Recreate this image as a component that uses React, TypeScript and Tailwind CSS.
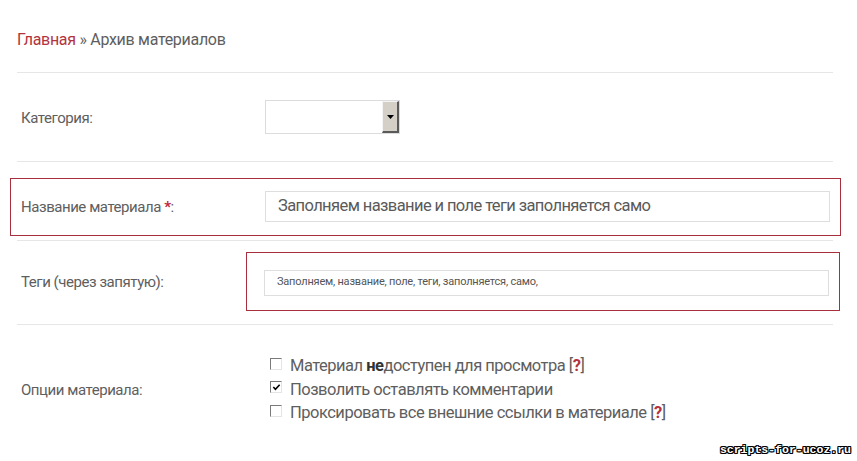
import React from "react";

function Checkbox({ checked }: { checked?: boolean }) {
  return (
    <span className="relative inline-block w-[12px] h-[12px] ml-[5px] mr-[8px] bg-white border-t border-l border-t-[#7a7a7a] border-l-[#7a7a7a] border-b border-r border-b-[#e4e4e4] border-r-[#e4e4e4] shrink-0 -translate-y-[2px]">
      {checked && (
        <svg viewBox="0 0 10 10" className="absolute left-[1px] top-[1px] w-[9px] h-[9px]">
          <path d="M1.5 4.5 L3.8 7 L8.5 2" fill="none" stroke="#000" strokeWidth="1.8" />
        </svg>
      )}
    </span>
  );
}

export default function App() {
  const font = { fontFamily: "Roboto, 'Noto Sans', sans-serif" };
  return (
    <div className="relative w-[857px] h-[461px] bg-white overflow-hidden" style={font}>
      <div className="ml-[17px] w-[816px] text-[#5e5e5e]">
        <div className="h-[73px] pt-[28px] text-[16px] leading-[24px] tracking-[-0.3px] border-b border-[#e6e6e6]">
          <span className="text-[#b3333d]">Главная</span> » Архив материалов
        </div>

        <div className="flex items-center h-[89px] border-b border-[#e6e6e6]">
          <div className="w-[248px] pl-[4px] text-[15px] tracking-[-0.45px] pt-[3px]">Категория:</div>
          <div className="flex w-[135px] h-[34px] border border-[#dcdcdc] bg-white">
            <div className="flex-1" />
            <div className="w-[17px] h-full bg-[#d4d0c8] border-t border-l border-t-[#f4f4f4] border-l-[#f4f4f4] border-b-2 border-r-2 border-b-[#5a5a5a] border-r-[#5a5a5a] flex items-center justify-center">
              <svg width="7" height="4" viewBox="0 0 7 4"><path d="M0 0 H7 L3.5 4 Z" fill="#000" /></svg>
            </div>
          </div>
        </div>

        <div className="relative flex items-center h-[79px] border-b border-[#e6e6e6]">
          <div className="absolute left-[-7px] top-[16px] w-[831px] h-[58px] border border-[#a8303e] pointer-events-none" />
          <div className="w-[248px] pl-[4px] text-[15px] tracking-[-0.45px] pt-[13px]">
            Название материала <span className="text-[#c0273a] font-bold">*</span>:
          </div>
          <div className="mt-[10px] w-[565px] h-[31px] border border-[#dedede] flex items-center pl-[12px] text-[16.5px] tracking-[-0.6px] text-[#5a5a5a]">
            Заполняем название и поле теги заполняется само
          </div>
        </div>

        <div className="relative flex items-center h-[84px] border-b border-[#e6e6e6]">
          <div className="absolute left-[229px] top-[11px] w-[594px] h-[59px] border border-[#a8303e] pointer-events-none" />
          <div className="w-[247px] pl-[4px] text-[15px] tracking-[-0.45px]">Теги (через запятую):</div>
          <div className="w-[565px] h-[26px] border border-[#dedede] flex items-center pl-[12px] text-[11px] tracking-[-0.2px] text-[#555]">
            Заполняем, название, поле, теги, заполняется, само,
          </div>
        </div>

        <div className="flex items-center pt-[29px]">
          <div className="w-[248px] pl-[4px] text-[15px] tracking-[-0.45px] pt-[2px]">Опции материала:</div>
          <div className="flex flex-col text-[16.5px] leading-[23.5px] tracking-[-0.5px]">
            <div className="flex items-center">
              <Checkbox />
              <span>
                Материал <b className="text-[#333]">не</b>доступен для просмотра [<b className="text-[#b3333d]">?</b>]
              </span>
            </div>
            <div className="flex items-center">
              <Checkbox checked />
              <span>Позволить оставлять комментарии</span>
            </div>
            <div className="flex items-center">
              <Checkbox />
              <span>
                Проксировать все внешние ссылки в материале [<b className="text-[#b3333d]">?</b>]
              </span>
            </div>
          </div>
        </div>
      </div>

      <div
        className="absolute right-[6px] bottom-[4px] text-white font-bold text-[11.5px] leading-[14px]"
        style={{
          fontFamily: "'Liberation Mono', 'DejaVu Sans Mono', monospace",
          textShadow:
            "1px 0 0 #000, -1px 0 0 #000, 0 1px 0 #000, 0 -1px 0 #000, 1px 1px 0 #000, -1px -1px 0 #000, 1px -1px 0 #000, -1px 1px 0 #000",
        }}
      >
        scripts-for-ucoz.ru
      </div>
    </div>
  );
}
